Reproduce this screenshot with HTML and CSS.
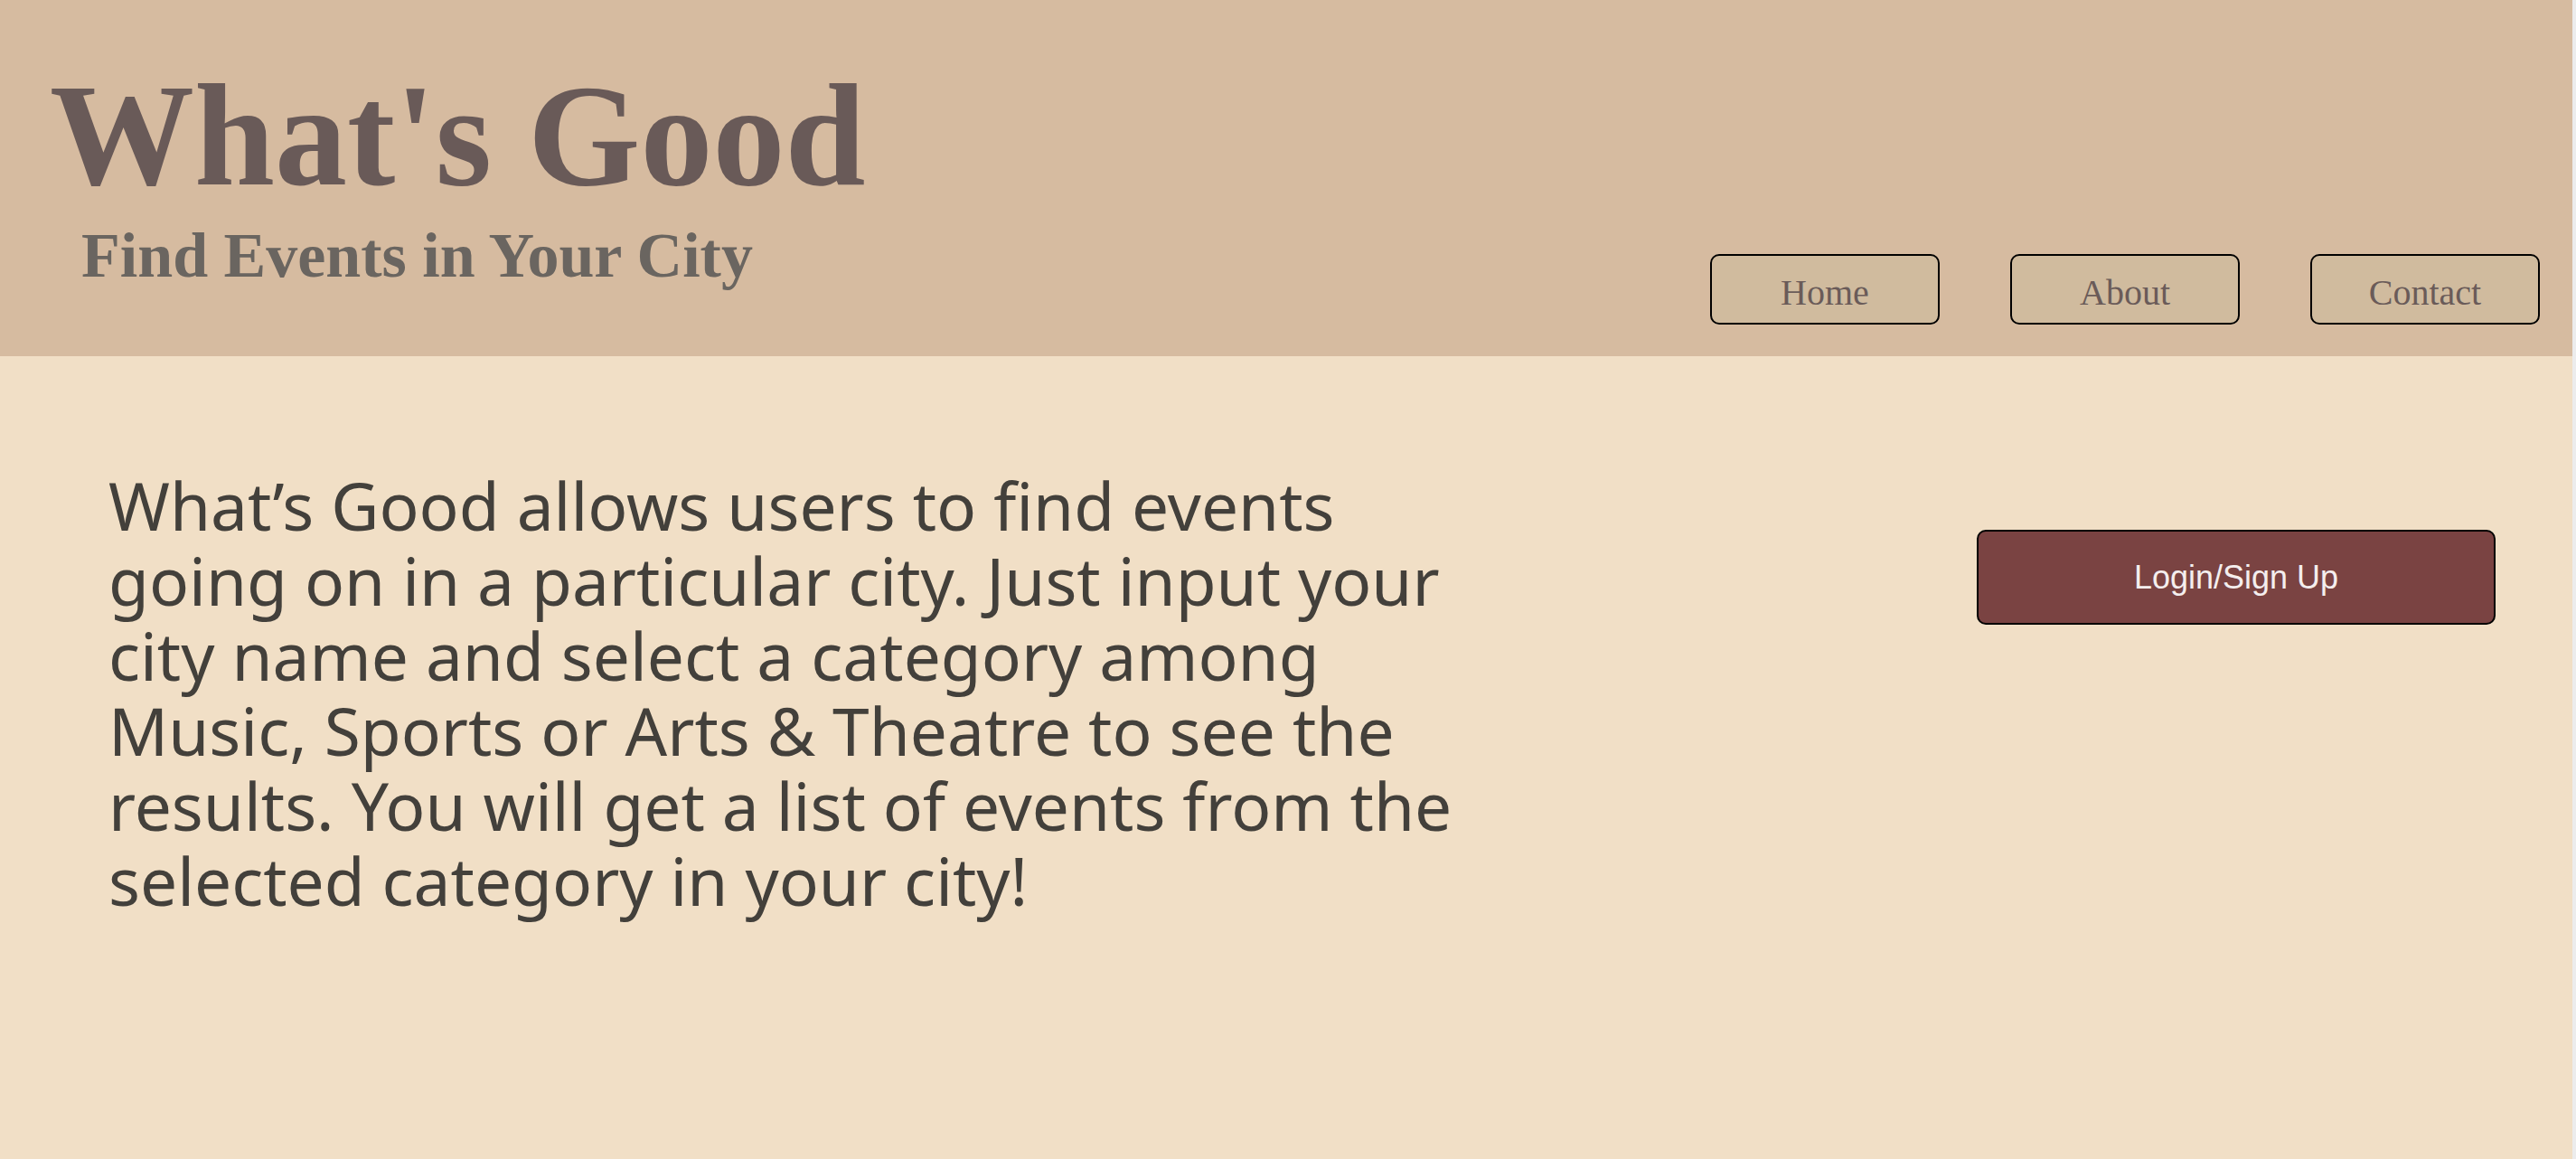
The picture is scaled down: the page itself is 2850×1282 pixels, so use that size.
FILE: index.html
```html
<!DOCTYPE html>
<html lang="en">
<head>
<meta charset="utf-8">
<title>What's Good</title>
<link rel="stylesheet" href="styles.css">
</head>
<body>
<div class="page">
  <header class="site-header">
    <div class="brand">
      <h1 class="brand-title">What's Good</h1>
      <h2 class="brand-tagline">Find Events in Your City</h2>
    </div>
    <nav class="nav">
      <button class="nav-btn">Home</button>
      <button class="nav-btn">About</button>
      <button class="nav-btn">Contact</button>
    </nav>
  </header>
  <main class="main">
    <p class="intro">What’s Good allows users to find events going on in a particular city. Just input your city name and select a category among Music, Sports or Arts &amp; Theatre to see the results. You will get a list of events from the selected category in your city!</p>
    <div class="actions">
      <button class="login-btn">Login/Sign Up</button>
    </div>
  </main>
</div>
</body>
</html>
```

FILE: styles.css
```css
html {
  background: #ececec;
}
body {
  margin: 0;
  height: 1282px;
  overflow: hidden;
}
.page {
  width: 2846px;
  height: 1282px;
  background: #f1dfc6;
  display: flex;
  flex-direction: column;
}
.site-header {
  height: 394px;
  background: #d6bba0;
  display: flex;
  justify-content: space-between;
  align-items: flex-start;
  padding: 0 36px 0 55px;
  box-sizing: border-box;
}
.brand {
  padding-top: 70px;
}
.brand-title {
  margin: 0;
  font-family: "Liberation Serif", "Times New Roman", serif;
  font-weight: bold;
  font-size: 160px;
  line-height: 1;
  color: #695a58;
}
.brand-tagline {
  margin: 18px 0 0 35px;
  font-family: "Liberation Serif", "Times New Roman", serif;
  font-weight: bold;
  font-size: 70px;
  line-height: 1;
  color: #6a6560;
}
.nav {
  display: flex;
  gap: 78px;
  margin-top: 281px;
}
.nav-btn {
  width: 254px;
  height: 78px;
  box-sizing: border-box;
  padding: 8px 0 0;
  margin: 0;
  border: 2px solid #000;
  border-radius: 10px;
  background: #d0bb9e;
  font-family: "Liberation Serif", "Times New Roman", serif;
  font-size: 40px;
  line-height: 66px;
  color: #6a5b59;
  text-align: center;
}
.main {
  flex: 1;
  display: flex;
  justify-content: space-between;
  align-items: flex-start;
  padding: 0 85px 0 120px;
}
.intro {
  margin: 123px 0 0;
  width: 1520px;
  font-family: "Noto Sans", "Open Sans", sans-serif;
  font-size: 73px;
  line-height: 83px;
  color: #43403b;
}
.actions {
  margin-top: 192px;
}
.login-btn {
  width: 574px;
  height: 105px;
  box-sizing: border-box;
  margin: 0;
  padding: 0;
  border: 2px solid #000;
  border-radius: 10px;
  background: #7a4342;
  font-family: "Liberation Sans", Arial, sans-serif;
  font-size: 36px;
  color: #f4eeee;
  text-align: center;
}
```
